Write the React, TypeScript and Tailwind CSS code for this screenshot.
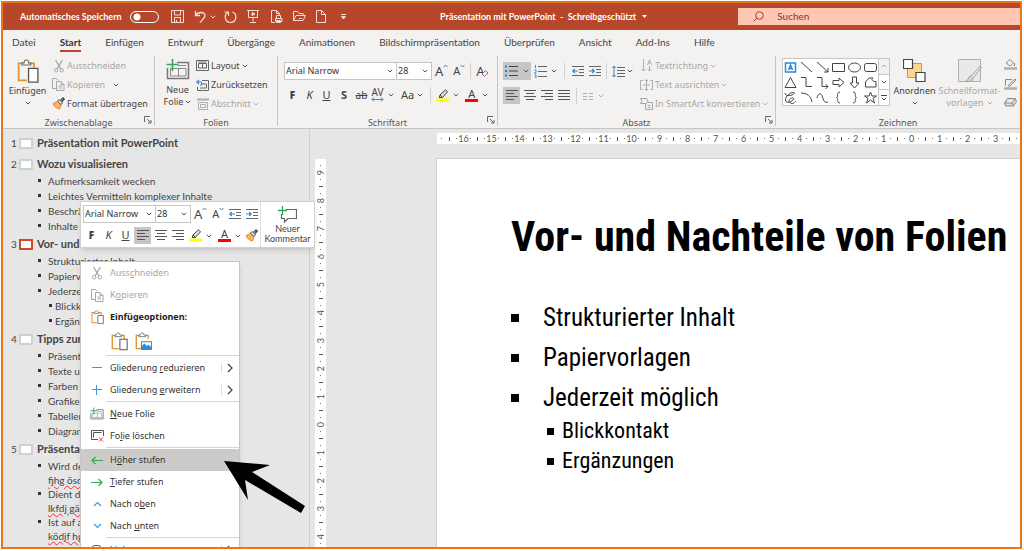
import React from 'react';

type IconProps = { w: number; h: number; color?: string; className?: string; children: React.ReactNode };

const Svg = ({ w, h, color = '#444', className = '', children }: IconProps) => (
  <svg width={w} height={h} viewBox={`0 0 ${w} ${h}`} fill="none" stroke={color} strokeWidth="1" className={`shrink-0 ${className}`} aria-hidden="true">
    {children}
  </svg>
);

const Chevron = ({ color = '#555', className = '' }: { color?: string; className?: string }) => (
  <Svg w={6} h={4} color={color} className={className}><path d="M.8.8 3 3 5.2.8" /></Svg>
);

const Scissors = () => (
  <Svg w={12} h={14} color="#a9a7a5">
    <path d="M2.5 1 8 10M9.5 1 4 10" strokeWidth="1.3" />
    <circle cx="3.2" cy="11.3" r="1.7" /><circle cx="8.8" cy="11.3" r="1.7" />
  </Svg>
);

const Copy = () => (
  <Svg w={13} h={13} color="#a9a7a5">
    <path d="M4.5 10.500H.5v-10h4l2 2" />
    <path d="M4.500 3.500h4.500l3 3v6H4.500zM9 3.500v3h3M6.500 8h3.500M6.500 10h3.500" />
  </Svg>
);

const Brush = () => (
  <Svg w={13} h={13}>
    <path d="M1 6.500 5.500 4.500 9 8 7.500 12C4.500 11.500 2 9.500 1 6.500z" fill="#f5b56b" stroke="#e8862c" />
    <path d="M5.500 4 7 2.500 10.500 6 9 7.500z" fill="#fff" />
    <path d="M8.500 3.500 11 1l1.200 1.200L9.800 4.800" strokeWidth="1.300" />
  </Svg>
);

const Clipboard = ({ size = 17, picture = false }: { size?: number; picture?: boolean }) => (
  <svg width={size} height={size * 1.1} viewBox="0 0 20 22" fill="none" className="shrink-0" aria-hidden="true">
    <path d="M5 4H1.500v15.500H9M12 4h3.500v4" stroke="#e8912d" strokeWidth="1.600" />
    <path d="M4.500 5.500V3.500H6.500C6.500 0 10.500 0 10.500 3.500h2v2z" fill="#fff" stroke="#666" />
    {picture ? (
      <>
        <path d="M7.500 11.500h12v9h-12z" fill="#fff" stroke="#555" />
        <path d="M8 20.500v-4l3-3 3 3 2-1.500 3 3v2.500z" fill="#2b88d8" />
      </>
    ) : (
      <path d="M10.500 8.500h8.500v12.500h-8.500z" fill="#fff" stroke="#555" strokeWidth="1.200" />
    )}
  </svg>
);

const NewSlide = ({ size = 24 }: { size?: number }) => (
  <svg width={size} height={size} viewBox="0 0 24 24" fill="none" className="shrink-0" aria-hidden="true">
    <path d="M11 4.500h11.500v16h-21V10" stroke="#777" strokeWidth="1.500" />
    <path d="M4.500 10.500h15.500v7.500H4.500zM12.500 10.500V18M12 7.500h8" stroke="#888" />
    <path d="M6.500 1v12M.500 6.500h12" stroke="#3aa558" strokeWidth="1.600" />
  </svg>
);

const Lines = ({ align }: { align: 'left' | 'center' | 'right' | 'justify' }) => {
  const d = {
    left: 'M0 .5h12M0 3.500h8M0 6.500h12M0 9.500h8',
    center: 'M0 .5h12M2 3.500h8M0 6.500h12M2 9.500h8',
    right: 'M0 .5h12M4 3.500h8M0 6.500h12M4 9.500h8',
    justify: 'M0 .5h12M0 3.500h12M0 6.500h12M0 9.500h12',
  }[align];
  return <Svg w={12} h={11} color="#555"><path d={d} /></Svg>;
};

const Indent = ({ out = false }: { out?: boolean }) => (
  <Svg w={12} h={11} color="#666">
    <path d="M0 .5h12M7 3.500h5M7 6.500h5M0 9.500h12" />
    <path d={out ? 'M6 5H.8M2.800 3 .8 5l2 2' : 'M0 5h5.200M3.200 3l2 2-2 2'} stroke="#2b88d8" strokeWidth="1.200" />
  </Svg>
);

const GrowFont = ({ shrink = false }: { shrink?: boolean }) => (
  <span className="flex items-start">
    <span className={shrink ? 'text-[11px] leading-[14px]' : 'text-[13px] leading-[14px]'}>A</span>
    <Svg w={5} h={5} color="#2b88d8"><path d={shrink ? 'M.5 1 2.500 3 4.500 1' : 'M.5 3 2.500 1 4.500 3'} /></Svg>
  </span>
);

const Highlighter = () => (
  <Svg w={13} h={13}>
    <path d="M0 9.500h13v3H0z" fill="#ff0" stroke="none" />
    <path d="M4 6 9.500.8l2 2L6.500 8.500H3.200zM4 6l2.500 2.500" fill="#ddd" />
  </Svg>
);

const FontColor = () => (
  <span className="flex w-[13px] flex-col items-center">
    <span className="text-[11px] leading-[10px]">A</span>
    <span className="h-[3px] w-full bg-[#f00]" />
  </span>
);

const Launcher = ({ label }: { label: string }) => (
  <button aria-label={label} className="absolute right-0.5 bottom-0.5">
    <Svg w={8} h={8} color="#666"><path d="M.5 6V.5H6M3 3l4 4M7 4v3H4" /></Svg>
  </button>
);

const Divider = ({ className = '' }: { className?: string }) => <span className={`h-4 w-px bg-[#d2d0ce] ${className}`} />;

type PickerProps = { label: string; value: string; className: string };

const Picker = ({ label, value, className }: PickerProps) => (
  <span className={`relative flex h-[18px] items-center border border-[#c8c6c4] bg-white ${className}`}>
    <select aria-label={label} defaultValue={value} className="w-full appearance-none bg-transparent pl-px text-[9px] leading-4 text-[#333] outline-none">
      <option>{value}</option>
    </select>
    <Chevron className="pointer-events-none absolute right-[3px]" />
  </span>
);

const Group = ({ title, className, launcher = true, children }: { title: string; className: string; launcher?: boolean; children: React.ReactNode }) => (
  <section aria-label={title} className={`relative flex flex-col ${className}`}>
    <div className="flex h-[60px] shrink-0">{children}</div>
    <h2 className="text-center text-[9px] leading-[14px] text-[#555]">{title}</h2>
    {launcher && <Launcher label={`${title} Optionen`} />}
  </section>
);

const RowButton = ({ icon, label, chevron = false, disabled = false }: { icon: React.ReactNode; label: string; chevron?: boolean; disabled?: boolean }) => (
  <button disabled={disabled} className={`flex h-[19px] items-center gap-0.5 whitespace-nowrap text-[9px] ${disabled ? 'text-[#a9a7a5]' : 'text-[#444]'}`}>
    <span className="flex w-[13px] justify-center">{icon}</span>
    {label}
    {chevron && <Chevron color={disabled ? '#b1afad' : '#555'} />}
  </button>
);

const TitleBar = () => (
  <header className="flex h-[27px] shrink-0 items-center bg-[#b7472a] text-[10px] text-white">
    <div className="flex w-[346px] shrink-0 items-center pl-[17px]">
      <label htmlFor="autosave" className="w-[110px] whitespace-nowrap text-[9px] font-bold">Automatisches Speichern</label>
      <input id="autosave" type="checkbox" role="switch" className="h-3 w-[29px] appearance-none rounded-full border border-white bg-[radial-gradient(circle_at_6px_5px,white_3px,transparent_4px)]" />
      <button aria-label="Speichern" className="ml-3"><Svg w={13} h={13} color="#f7dcd4"><path d="M.5.5h12v12H.5zM3.500.5v4.500h6V.5M3.500 12.500v-5h6v5M5.500 12.500V10" /></Svg></button>
      <button aria-label="Rückgängig" className="ml-2.5 flex items-center gap-1"><Svg w={12} h={14} color="#f7dcd4"><path d="M1.500 1v4.500H6M1.500 5.500C4 1.500 10.500 1.500 11 5.500c0 2.500-3 4.500-5 7" strokeWidth="1.300" /></Svg><Chevron color="#f7dcd4" /></button>
      <button aria-label="Wiederholen" className="ml-2"><Svg w={13} h={14} color="#f7dcd4"><path d="M8.500 2c5 2 4.500 10-2 10.500C0 12 0 4 4 2.500M4.500 6V2H.5" strokeWidth="1.200" /></Svg></button>
      <button aria-label="Präsentation starten" className="ml-2.5"><Svg w={12} h={13} color="#f7dcd4"><path d="M0 .5h12M1.500.5v7h9v-7M6 7.500v4M3 12.500h6" /><path d="M5 2.500 8 4 5 5.500z" fill="#f7dcd4" /></Svg></button>
      <button aria-label="Drucken" className="ml-3"><Svg w={12} h={13} color="#f7dcd4"><path d="M4 12.500H.5V.5h5l3 3V5M5.500.5v3h3M5.500 8V5.500h4V8M4.500 8.500h6.500v3H4.500zM5.500 10.500h4v2h-4z" /></Svg></button>
      <button aria-label="Öffnen" className="ml-2.5"><Svg w={13} h={11} color="#f7dcd4"><path d="M.5 9.500v-9h4l1.500 2h4v2M.5 9.500 3 4.500h9.500L10 9.500zM6 7.500h3" /></Svg></button>
      <button aria-label="Neu" className="ml-2.5"><Svg w={10} h={13} color="#f7dcd4"><path d="M.5.5h5l4 4v8h-9zM5.500.5v4h4" /></Svg></button>
      <button aria-label="Symbolleiste anpassen" className="ml-3.5"><Svg w={7} h={6} color="#f7dcd4"><path d="M1 .5h5" /><path d="M1.500 2.500h4L3.500 5z" fill="#f7dcd4" /></Svg></button>
    </div>
    <h1 className="flex flex-1 items-center justify-center gap-1.5 whitespace-nowrap text-[9px] font-bold">
      Präsentation mit PowerPoint&nbsp; -&nbsp; Schreibgeschützt
      <Svg w={5} h={3} color="none"><path d="M0 0h5L2.500 3z" fill="#fff" /></Svg>
    </h1>
    <label className="flex h-[17px] w-[27.7%] items-center gap-[13px] bg-[#ffc7b4] pl-[15px]">
      <Svg w={11} h={11} color="#a4412a"><circle cx="6.500" cy="4.500" r="3.800" /><path d="M3.800 7.200.5 10.500" /></Svg>
      <input aria-label="Suchen" placeholder="Suchen" className="w-full min-w-0 bg-transparent text-[10px] placeholder:text-[#8f3420] outline-none" />
    </label>
  </header>
);

const tabs = ['Datei', 'Start', 'Einfügen', 'Entwurf', 'Übergänge', 'Animationen', 'Bildschirmpräsentation', 'Überprüfen', 'Ansicht', 'Add-Ins', 'Hilfe'];

const Tabs = () => (
  <nav className="flex h-[23px] shrink-0 items-start gap-6 bg-[#f3f2f1] pt-1 pl-[9px] text-[10px] leading-4 text-[#444]">
    {tabs.map(tab => (
      <button key={tab} className={tab === 'Start' ? 'border-b-2 border-[#b7472a] font-bold text-[#333]' : ''}>{tab}</button>
    ))}
  </nav>
);

const shapes = [
  <path d="M1.500 2h10v9h-10zM4.500 9 6.500 4l2 5M5 7.500h3" stroke="#2b88d8" strokeWidth="1.500" />,
  <path d="M1 1l11 10" />,
  <path d="M1 1l11 10M12 7v4H8" />,
  <path d="M.5 2.500h12v8H.5z" />,
  <ellipse cx="6.500" cy="6.500" rx="6" ry="4.500" />,
  <rect x=".5" y="2.500" width="12" height="8" rx="2" />,
  <path d="M6.500 1.500 12 11.500H1z" />,
  <path d="M1 1.500h5v9h6" />,
  <path d="M1 1.500h5v9h6M9.500 8l2.500 2.500L9.500 13" />,
  <path d="M1 4.500h6V2l5 4.500L7 11V8.500H1z" />,
  <path d="M4.500 1v6H2l4.500 5L11 7H8.500V1z" />,
  <path d="M9 2c-3 2 1 4 3 3.500V11H1.500V6L5 2z" />,
  <path d="M1 2c0 4 8 3 9.500 0C8 0 1 5 1.500 9s7 2 8-1-6 0-4 3 5 1 6.500-1" />,
  <path d="M1 2c6 0 10 3 11 9" />,
  <path d="M1 7c1-5 4-6 5.500-1S9 12 12 11" />,
  <path d="M8 1C4 1 7 6 4.500 6.500 7 7 4 12 8 12" />,
  <path d="M5 1c4 0 1 5 3.500 5.500C6 7 9 12 5 12" />,
  <path d="M6.500 1 8 5h4.500L9 7.500l1.500 4.500-4-3-4 3L4 7.500.5 5H5z" />,
];

const Ribbon = () => (
  <div className="flex h-[76px] shrink-0 overflow-hidden border-b border-[#c8c6c4] bg-[#f3f2f1] pt-[3px] pb-0.5 font-['Noto_Sans',sans-serif] text-[#444] [&>section+section]:border-l [&>section+section]:border-[#c8c6c4]">
    <Group title="Zwischenablage" className="w-[151px] shrink-0">
      <button className="flex w-[49px] shrink-0 flex-col items-center pt-[3px] text-[9px] leading-3">
        <Clipboard size={22} />
        <span className="pt-0.5">Einfügen</span>
        <Chevron className="mt-1" />
      </button>
      <div className="flex flex-col items-start">
        <RowButton icon={<Scissors />} label="Ausschneiden" disabled />
        <span className="flex items-center gap-2"><RowButton icon={<Copy />} label="Kopieren" disabled /><Chevron /></span>
        <RowButton icon={<Brush />} label="Format übertragen" />
      </div>
    </Group>

    <Group title="Folien" className="w-[123px] shrink-0" launcher={false}>
      <button className="flex w-[41px] shrink-0 flex-col items-center pt-0.5 pl-1 text-[9px] leading-3">
        <NewSlide />
        <span className="pt-0.5">Neue</span>
        <span className="flex items-center gap-0.5">Folie <Chevron /></span>
      </button>
      <div className="flex flex-col items-start">
        <RowButton icon={<Svg w={13} h={11} color="#666"><path d="M.5.5h12v10H.5zM2.500 3.500h8v4.500h-8zM6.500 3.500V8M2.500 2h8" /></Svg>} label="Layout" chevron />
        <RowButton icon={<Svg w={13} h={12} color="#666"><path d="M6 1.500h6.500v10h-11V8M5.500 5h5v4H4" /><path d="M.8 3h3.500c2 0 2 3 0 3.500M3 .8.8 3 3 5.200" stroke="#2b88d8" strokeWidth="1.200" /></Svg>} label="Zurücksetzen" />
        <RowButton icon={<Svg w={12} h={12} color="#b1afad"><path d="M0 1.500h12" strokeWidth="2" /><path d="M1.500 4.500h9v7h-9zM3.500 6.500h5v3h-5z" /></Svg>} label="Abschnitt" chevron disabled />
      </div>
    </Group>

    <Group title="Schriftart" className="w-[220px] shrink-0">
      <div className="flex flex-1 flex-col gap-1.5 pt-1.5 pl-1.5">
        <div className="flex items-center">
          <Picker label="Schriftart" value="Arial Narrow" className="w-[113px]" />
          <Picker label="Schriftgrad" value="28" className="w-[35px] border-l-0" />
          <button aria-label="Schriftgrad vergrößern" className="ml-[3px]"><GrowFont /></button>
          <button aria-label="Schriftgrad verkleinern" className="ml-[5px]"><GrowFont shrink /></button>
          <Divider className="mx-[5px]" />
          <button aria-label="Formatierung löschen" className="flex items-center text-[13px] leading-[14px]">A<Svg w={8} h={8} color="#a05ca8" className="-ml-1 mt-1"><path d="M1 5 4.500 1.500 7 4 3.500 7.500z" fill="#f3f2f1" /></Svg></button>
        </div>
        <div className="flex h-[18px] items-center text-[11px]">
          <button aria-label="Fett" className="w-[17px] text-[10px] font-black">F</button>
          <button aria-label="Kursiv" className="w-[17px] italic">K</button>
          <button aria-label="Unterstrichen" className="w-[17px] underline">U</button>
          <button aria-label="Schatten" className="w-[18px] font-bold">S</button>
          <button aria-label="Durchgestrichen" className="w-[17px] text-[10px] line-through">ab</button>
          <button aria-label="Zeichenabstand" className="flex items-center gap-[3px]">
            <span className="flex w-[15px] flex-col items-center text-[10px] leading-[9px]">AV<Svg w={13} h={5} color="#2b88d8"><path d="M1 2.500h11M3 .5l-2 2 2 2M10 .5l2 2-2 2" /></Svg></span>
            <Chevron />
          </button>
          <button aria-label="Groß-/Kleinschreibung" className="ml-[7px] flex items-center gap-[3px]">Aa <Chevron /></button>
          <Divider className="mr-[5px] ml-[7px]" />
          <button aria-label="Texthervorhebungsfarbe" className="flex items-center gap-1"><Highlighter /><Chevron /></button>
          <button aria-label="Schriftfarbe" className="ml-1.5 flex items-center gap-1"><FontColor /><Chevron /></button>
        </div>
      </div>
    </Group>

    <Group title="Absatz" className="w-[278px] shrink-0">
      <div className="flex w-[142px] shrink-0 flex-col gap-[7px] pt-1.5 pl-[5px]">
        <div className="flex h-[18px] items-center">
          <button aria-label="Aufzählungszeichen" className="flex h-[18px] w-7 items-center justify-center gap-[5px] bg-[#c8c6c4]">
            <Svg w={13} h={12}><path d="M4 1.500h9M4 6h9M4 10.500h9" /><path d="M0 1.500h2M0 6h2M0 10.500h2" stroke="#2b88d8" strokeWidth="2" /></Svg><Chevron />
          </button>
          <button aria-label="Nummerierung" className="ml-[3px] flex items-center gap-1">
            <Svg w={13} h={13} color="#666"><path d="M4 1.500h9M4 6.500h9M4 11.500h9" /><path d="M1.500 0v3M.5 5h1.500v1.500l-1.500 1.500h2M.5 10h1.500v3H.5" stroke="#2b88d8" /></Svg><Chevron />
          </button>
          <Divider className="mx-[7px]" />
          <button aria-label="Listenebene verringern"><Indent out /></button>
          <button aria-label="Listenebene erhöhen" className="ml-[5px]"><Indent /></button>
          <Divider className="mx-[5px]" />
          <button aria-label="Zeilenabstand" className="flex items-center gap-0.5">
            <Svg w={13} h={13} color="#666"><path d="M5 2.500h8M5 5.500h8M5 8.500h8M5 11.500h8" /><path d="M2 1v11M.5 3 2 1l1.500 2M.5 10 2 12l1.500-2" stroke="#2b88d8" /></Svg><Chevron />
          </button>
        </div>
        <div className="flex h-[17px] items-center">
          <button aria-label="Linksbündig" className="flex h-[17px] w-[17px] items-center justify-center bg-[#c8c6c4]"><Lines align="left" /></button>
          <button aria-label="Zentriert" className="ml-1"><Lines align="center" /></button>
          <button aria-label="Rechtsbündig" className="ml-[5px]"><Lines align="right" /></button>
          <button aria-label="Blocksatz" className="ml-[5px]"><Lines align="justify" /></button>
          <Divider className="mx-1.5" />
          <button aria-label="Spalten" disabled className="flex items-center gap-[5px]"><Svg w={10} h={8} color="#b1afad"><path d="M0 1.500h4M6 1.500h4M0 4.500h4M6 4.500h4M0 7.500h4M6 7.500h4" /></Svg><Chevron color="#b1afad" /></button>
        </div>
      </div>
      <div className="flex flex-col items-start">
        <RowButton icon={<Svg w={12} h={13} color="#b1afad"><path d="M2.500 0v12M.5 10l2 2 2-2M8.500 7v5M6.500 10l2 2 2-2M6.500 6 8.500.5l2 5.500M7 4h3" /></Svg>} label="Textrichtung" chevron disabled />
        <RowButton icon={<Svg w={13} h={12} color="#b1afad"><path d="M3 1.500H.5v9H3M10 1.500h2.500v9H10M3 6h7M6.500 0v12M5 2l1.500-1.500L8 2M5 10l1.500 1.500L8 10" /></Svg>} label="Text ausrichten" chevron disabled />
        <RowButton icon={<Svg w={13} h={12} color="#a9a7a5"><path d="M.5.5h6L8 3 6.500 5.500h-6L2 3zM5.500 5.500v6h7v-7H8M7.500 7.500h3M7.500 9.500h3" /></Svg>} label="In SmartArt konvertieren" chevron disabled />
      </div>
    </Group>

    <Group title="Zeichnen" className="min-w-0 flex-1" launcher={false}>
      <div className="mt-0.5 ml-1.5 flex h-12 shrink-0 border border-[#c8c6c4] bg-white">
        <div className="grid grid-cols-6 gap-x-[3px] px-px pt-px">
          {shapes.map((shape, i) => <button key={i} aria-label={`Form ${i + 1}`} className="h-[15px]"><Svg w={13} h={13}>{shape}</Svg></button>)}
        </div>
        <div className="flex w-[11px] flex-col divide-y divide-[#c8c6c4] border-l border-[#c8c6c4] [&>button]:flex [&>button]:flex-1 [&>button]:items-center [&>button]:justify-center">
          <button aria-label="Nach oben blättern" className="bg-[#f3f2f1]"><Chevron className="rotate-180" color="#aaa" /></button>
          <button aria-label="Nach unten blättern"><Chevron /></button>
          <button aria-label="Weitere Formen"><Svg w={6} h={6}><path d="M0 .5h6M.8 2.800 3 5l2.200-2.200" /></Svg></button>
        </div>
      </div>
      <button className="ml-0.5 flex w-[45px] shrink-0 flex-col items-center pt-[3px] text-[9px] leading-3">
        <Svg w={23} h={24}><path d="M4.500 4.500h14v14h-14z" fill="#fcd68a" stroke="#e8912d" /><path d="M.5.500h9v9h-9zM13 13.500h9v9h-9z" fill="#fff" strokeWidth="1.200" /></Svg>
        <span className="pt-0.5">Anordnen</span>
        <Chevron className="mt-1" />
      </button>
      <button disabled className="flex w-[65px] shrink-0 flex-col items-center pt-[3px] text-[9px] leading-3 text-[#a9a7a5]">
        <Svg w={25} h={24} color="#b1afad"><path d="M1.500.5h22v22h-22z" fill="#ebe9e8" /><path d="M23.500 7 14 17M24.500 8.500 16 19M14 17c-3 0-2 4-5 5 3 1 7 1 7-3" fill="#d2d0ce" stroke="#a19f9d" /></Svg>
        <span className="pt-0.5">Schnellformat-</span>
        <span className="flex items-center gap-[3px]">vorlagen <Chevron color="#b1afad" /></span>
      </button>
      <div className="flex shrink-0 flex-col justify-between pt-0.5 pb-2 pl-0.5">
        <button aria-label="Fülleffekt" disabled><Svg w={13} h={12} color="#8a8886"><path d="M2 5 6 1.500 9.500 5 6 8zM10.500 5v3" /><path d="M0 10.500h13" strokeWidth="2.500" stroke="#b1afad" /></Svg></button>
        <button aria-label="Formkontur" disabled><Svg w={13} h={12} color="#8a8886"><path d="M1.500 7.500v-6H8M4.500 7l6.500-6 1 1-6 6H4z" /><path d="M0 10.500h13" strokeWidth="2.500" stroke="#b1afad" /></Svg></button>
        <button aria-label="Formeffekte" disabled><Svg w={13} h={11} color="#8a8886"><path d="M3.500 1.500h7.500l1.500 3-3 4.500H1.500L.5 6zM.5 6h7.500l3-4.500M8 6l1.500 3" fill="#dddbd9" /></Svg></button>
      </div>
    </Group>
  </div>
);

type Entry = { text: string; sub?: boolean; noise?: string };

const outline: { title: string; entries: Entry[] }[] = [
  { title: 'Präsentation mit PowerPoint', entries: [] },
  { title: 'Wozu visualisieren', entries: [{ text: 'Aufmerksamkeit wecken' }, { text: 'Leichtes Vermitteln komplexer Inhalte' }, { text: 'Beschrän' }, { text: 'Inhalte' }] },
  { title: 'Vor- und', entries: [{ text: 'Strukturierter Inhalt' }, { text: 'Papiervo' }, { text: 'Jederzeit' }, { text: 'Blickko', sub: true }, { text: 'Ergänz', sub: true }] },
  { title: 'Tipps zur', entries: [{ text: 'Präsenta' }, { text: 'Texte un' }, { text: 'Farben' }, { text: 'Grafiken' }, { text: 'Tabellen' }, { text: 'Diagram' }] },
  { title: 'Präsentat', entries: [{ text: 'Wird der', noise: 'fjhg ösd' }, { text: 'Dient da', noise: 'lkfdj gäd' }, { text: 'Ist auf al', noise: 'ködjf hg' }] },
];

const Outline = () => (
  <aside className="flex w-[307px] shrink-0 flex-col gap-0.5 overflow-hidden border-r border-[#cfcfcf] pt-[5px] text-[10px] text-[#444]">
    {outline.map(({ title, entries }, i) => (
      <section key={title}>
        <h2 className="flex h-[18px] items-center text-[11px] font-bold">
          <span className="w-4 pl-2 text-[10px] font-normal">{i + 1}</span>
          <span className={`mr-1 h-[11px] w-[14px] border-2 bg-white ${i === 2 ? 'border-[#d24726]' : 'border-[#ccd1d5]'}`} />
          {title}
        </h2>
        <ul className={`mt-px flex flex-col leading-[14px] ${i === 4 ? '' : 'gap-px'}`}>
          {entries.map(({ text, sub, noise }) => (
            <li key={text} className={`flex items-start ${sub ? 'gap-[3px] pl-[46px]' : 'gap-[7px] pl-[35px]'}`}>
              <span className="mt-[5px] h-[3px] w-[3px] shrink-0 bg-[#333]" />
              <span>
                {text}
                {noise && <span className="block underline decoration-red-500 decoration-wavy decoration-1">{noise}</span>}
              </span>
            </li>
          ))}
        </ul>
      </section>
    ))}
  </aside>
);

const vertical = [9, 8, 7, 6, 5, 4, 3, 2, 1, 0, 1, 2, 3, 4];
const horizontal = [16, 15, 14, 13, 12, 11, 10, 9, 8, 7, 6, 5, 4, 3, 2, 1, 0, 1, 2, 3];

const Dot = () => <span className="h-px w-px bg-[#777]" />;

const VerticalRuler = () => (
  <div className="mt-[30px] ml-[5px] flex w-[11px] shrink-0 flex-col overflow-hidden bg-white pt-[3px] text-[9px] leading-[10px] text-[#555]">
    {vertical.map((n, i) => (
      <div key={i} className="flex shrink-0 flex-col [&>span]:flex [&>span]:h-[7px] [&>span]:items-center [&>span]:justify-center">
        {i > 0 && <span><i className="h-px w-1 bg-[#555]" /></span>}
        <span><Dot /></span>
        <span><b className="rotate-180 font-normal [writing-mode:vertical-rl]">{n}</b></span>
        <span><Dot /></span>
      </div>
    ))}
  </div>
);

const HorizontalRuler = () => (
  <div className="mt-1 ml-px flex h-[11px] overflow-hidden bg-white text-[9px] leading-[11px] text-[#555] [&_span]:shrink-0">
    <span className="flex w-[9px] items-center justify-center"><Dot /></span>
    {horizontal.map((n, i) => (
      <div key={i} className="flex shrink-0 [&>span]:flex [&>span]:w-[7px] [&>span]:items-center [&>span]:justify-center">
        <span><i className="h-1 w-px bg-[#555]" /></span>
        <span><Dot /></span>
        <span>{n}</span>
        <span><Dot /></span>
      </div>
    ))}
    <span className="flex w-[7px] items-center justify-center"><i className="h-1 w-px bg-[#555]" /></span>
    <span className="flex w-[7px] items-center justify-center"><Dot /></span>
  </div>
);

const Slide = () => (
  <article className="mt-[14px] flex-1 border-t border-l border-[#cfcfcf] bg-white pt-[50px] pl-[74px] font-['Liberation_Sans_Narrow','Roboto_Condensed','Liberation_Sans',sans-serif] whitespace-nowrap text-black">
    <h2 className="text-[42px] leading-[56px] font-bold">Vor- und Nachteile von Folien</h2>
    <ul className="mt-[35px] flex flex-col gap-1 text-[25px] leading-9">
      {['Strukturierter Inhalt', 'Papiervorlagen', 'Jederzeit möglich'].map(t => (
        <li key={t} className="flex items-center gap-6"><span className="h-2 w-2 bg-black" />{t}</li>
      ))}
    </ul>
    <ul className="pl-9 text-[22px] leading-[30px]">
      {['Blickkontakt', 'Ergänzungen'].map(t => (
        <li key={t} className="flex items-center gap-2"><span className="h-[7px] w-[7px] bg-black" />{t}</li>
      ))}
    </ul>
  </article>
);

const MiniToolbar = () => (
  <div role="toolbar" aria-label="Minisymbolleiste" className="absolute top-[201px] left-20 flex h-[47px] w-[235px] border border-[#d2d0ce] bg-white text-[#444] shadow-md">
    <div className="flex w-[180px] flex-col gap-1 border-r border-[#e1dfdd] pt-[3px] pl-0.5 font-['Noto_Sans',sans-serif]">
      <div className="flex items-center">
        <Picker label="Schriftart" value="Arial Narrow" className="w-[73px]" />
        <Picker label="Schriftgrad" value="28" className="w-[35px] border-l-0" />
        <button aria-label="Schriftgrad vergrößern" className="ml-[3px]"><GrowFont /></button>
        <button aria-label="Schriftgrad verkleinern" className="ml-[5px]"><GrowFont shrink /></button>
        <button aria-label="Listenebene verringern" className="ml-[5px]"><Indent out /></button>
        <button aria-label="Listenebene erhöhen" className="ml-[5px]"><Indent /></button>
      </div>
      <div className="flex h-[17px] items-center text-[11px]">
        <button aria-label="Fett" className="w-[17px] text-[10px] font-black">F</button>
        <button aria-label="Kursiv" className="w-[17px] italic">K</button>
        <button aria-label="Unterstrichen" className="w-[17px] underline">U</button>
        <button aria-label="Linksbündig" className="flex h-[17px] w-[17px] items-center justify-center bg-[#c8c6c4]"><Lines align="left" /></button>
        <button aria-label="Zentriert" className="ml-1"><Lines align="center" /></button>
        <button aria-label="Rechtsbündig" className="ml-[5px]"><Lines align="right" /></button>
        <button aria-label="Texthervorhebungsfarbe" className="ml-[5px] flex items-center gap-1"><Highlighter /><Chevron /></button>
        <button aria-label="Schriftfarbe" className="ml-1.5 flex items-center gap-1"><FontColor /><Chevron /></button>
        <button aria-label="Format übertragen" className="ml-1"><Brush /></button>
      </div>
    </div>
    <button className="flex flex-1 flex-col items-center pt-1 text-[9px] leading-[10px]">
      <Svg w={19} h={18} color="#666"><path d="M8 3.500h10.500v9H10l-3.500 3.500v-3.500H3.500V8" strokeWidth="1.200" /><path d="M4.500 0v9M0 4.500h9" stroke="#3aa558" strokeWidth="1.300" /></Svg>
      <span>Neuer</span>
      <span>Kommentar</span>
    </button>
  </div>
);

type ItemProps = { icon: React.ReactNode; before: string; hot: string; after: string; more?: boolean; disabled?: boolean; active?: boolean };

const MenuItem = ({ icon, before, hot, after, more = false, disabled = false, active = false }: ItemProps) => (
  <button role="menuitem" disabled={disabled} className={`flex h-[22px] w-full items-center pr-1 text-left text-[9px] ${active ? 'bg-[#cdcbc9]' : ''} ${disabled ? 'text-[#a9a7a5]' : 'text-[#333]'}`}>
    <span className="flex w-[29px] justify-center pr-px pl-1">{icon}</span>
    <span className="flex-1">{before}<u>{hot}</u>{after}</span>
    {more && <Svg w={16} h={10} color="#444"><path d="M2.500 0v10" stroke="#ddd" /><path d="M9 1l4 4-4 4" strokeWidth="1.200" /></Svg>}
  </button>
);

const Separator = () => <div role="separator" className="mb-px ml-[25px] h-px bg-[#d8d6d4]" />;

const ContextMenu = () => (
  <div role="menu" className="absolute top-[261px] left-20 w-40 border border-[#c8c6c4] bg-white font-['Noto_Sans',sans-serif] shadow-md">
    <MenuItem icon={<Scissors />} before="Auss" hot="c" after="hneiden" disabled />
    <MenuItem icon={<Copy />} before="K" hot="o" after="pieren" disabled />
    <div className="flex h-[22px] items-center text-[9px] font-bold text-[#222]"><span className="flex w-[29px] justify-center pl-1"><Clipboard size={13} /></span>Einfügeoptionen:</div>
    <div className="flex h-[27px] items-center gap-[7px] pl-[30px]">
      <button aria-label="Zieldesign verwenden"><Clipboard /></button>
      <button aria-label="Grafik"><Clipboard picture /></button>
    </div>
    <Separator />
    <MenuItem icon={<Svg w={10} h={10} color="#3c97dd"><path d="M0 4.500h10" /></Svg>} before="Gliederung " hot="r" after="eduzieren" more />
    <MenuItem icon={<Svg w={10} h={10} color="#3c97dd"><path d="M0 4.500h10M4.500 0v10" /></Svg>} before="Gliederung " hot="e" after="rweitern" more />
    <Separator />
    <MenuItem icon={<NewSlide size={14} />} before="" hot="N" after="eue Folie" />
    <MenuItem icon={<Svg w={13} h={12} color="#555"><path d="M7 9.500H.5v-9h12V6M2.500 7.500v-5h8" /><path d="m8 7.500 4 4M12 7.500l-4 4" stroke="#e03c31" /></Svg>} before="Fo" hot="l" after="ie löschen" />
    <Separator />
    <MenuItem icon={<Svg w={12} h={9} color="#3aa558"><path d="M12 4.500H1M4.500 1 1 4.500 4.500 8" strokeWidth="1.200" /></Svg>} before="H" hot="ö" after="her stufen" active />
    <MenuItem icon={<Svg w={12} h={9} color="#3aa558"><path d="M0 4.500h11M7.500 1 11 4.500 7.500 8" strokeWidth="1.200" /></Svg>} before="" hot="T" after="iefer stufen" />
    <MenuItem icon={<Svg w={9} h={6} color="#3c97dd"><path d="M1 5l3.500-3.500L8 5" strokeWidth="1.200" /></Svg>} before="Nach o" hot="b" after="en" />
    <MenuItem icon={<Svg w={9} h={6} color="#3c97dd"><path d="M1 1l3.500 3.500L8 1" strokeWidth="1.200" /></Svg>} before="Nach " hot="u" after="nten" />
    <Separator />
    <MenuItem icon={<Svg w={12} h={12} color="#555"><path d="M1.500 8V3.500a2 2 0 0 1 2-2h4a2 2 0 0 1 2 2V8z" /></Svg>} before="Lin" hot="k" after="" more />
  </div>
);

const App: React.FC = () => (
  <div className="h-screen bg-white p-px pr-0.5 pb-0.5 font-['Lato','Noto_Sans',sans-serif]">
    <div className="flex h-full flex-col overflow-hidden border-2 border-[#e8771c] bg-[#e6e6e6]">
      <TitleBar />
      <Tabs />
      <Ribbon />
      <main className="flex min-h-0 flex-1">
        <Outline />
        <VerticalRuler />
        <div className="ml-[110px] flex min-w-0 flex-1 flex-col overflow-hidden">
          <HorizontalRuler />
          <Slide />
        </div>
      </main>
    </div>
    {/* floating layers, cut off at the window's lower edge */}
    <div className="pointer-events-none absolute inset-x-0 top-0 bottom-1 overflow-hidden [&>*]:pointer-events-auto">
      <MiniToolbar />
      <ContextMenu />
      <svg width="84" height="54" viewBox="0 0 84 54" className="absolute top-[460px] left-[223px]" aria-hidden="true">
        <path d="M1 1 47 5 29 12 82 46 78 53 22 20 25 40z" fill="#000" />
      </svg>
    </div>
  </div>
);

export default App;
